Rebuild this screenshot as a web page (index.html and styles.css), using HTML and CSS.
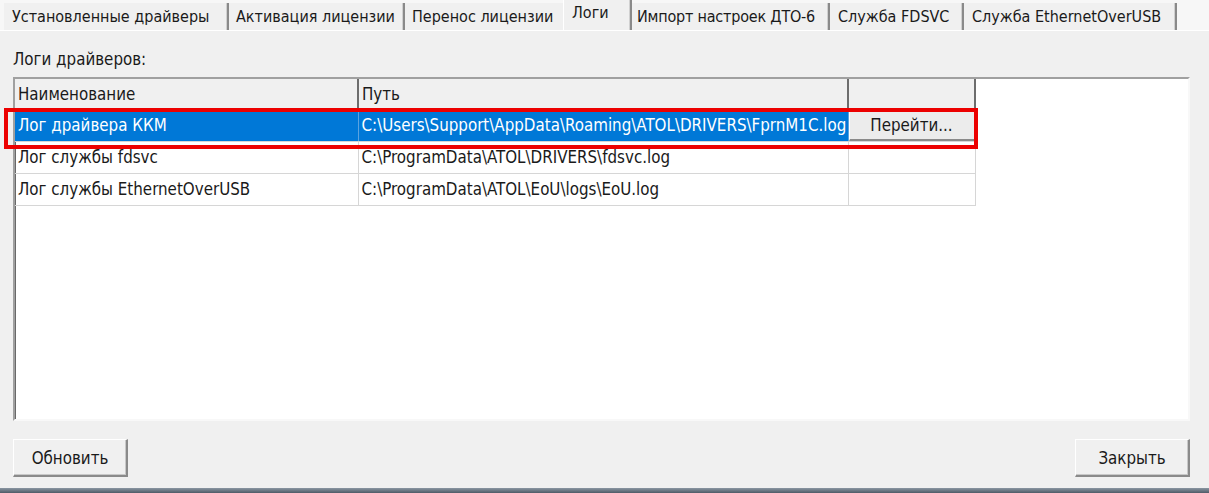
FILE: index.html
```html
<!DOCTYPE html>
<html lang="ru">
<head>
<meta charset="utf-8">
<title>Логи</title>
<link rel="stylesheet" href="styles.css">
</head>
<body>
<div class="window">
  <div class="tabs">
    <div class="tab t1">Установленные драйверы</div>
    <div class="tab t2">Активация лицензии</div>
    <div class="tab t3 prev">Перенос лицензии</div>
    <div class="tab t4 active">Логи</div>
    <div class="tab t5">Импорт настроек ДТО-6</div>
    <div class="tab t6">Служба FDSVC</div>
    <div class="tab t7">Служба EthernetOverUSB</div>
  </div>
  <div class="page">
    <div class="label">Логи драйверов:</div>
    <div class="listview">
      <table class="grid">
        <colgroup>
          <col class="c1"><col class="c2"><col class="c3"><col class="c4">
        </colgroup>
        <thead>
          <tr>
            <th>Наименование</th>
            <th>Путь</th>
            <th></th>
            <th class="blank"></th>
          </tr>
        </thead>
        <tbody>
          <tr class="selected">
            <td class="sel">Лог драйвера ККМ</td>
            <td class="sel">C:\Users\Support\AppData\Roaming\ATOL\DRIVERS\FprnM1C.log</td>
            <td class="btncell"><span class="cellbtn">Перейти...</span></td>
            <td class="blank"></td>
          </tr>
          <tr>
            <td>Лог службы fdsvc</td>
            <td>C:\ProgramData\ATOL\DRIVERS\fdsvc.log</td>
            <td></td>
            <td class="blank"></td>
          </tr>
          <tr>
            <td>Лог службы EthernetOverUSB</td>
            <td>C:\ProgramData\ATOL\EoU\logs\EoU.log</td>
            <td></td>
            <td class="blank"></td>
          </tr>
        </tbody>
      </table>
    </div>
    <div class="buttons">
      <button class="btn">Обновить</button>
      <button class="btn">Закрыть</button>
    </div>
  </div>
  <div class="bottombar"></div>
  <div class="highlight"></div>
</div>
</body>
</html>
```
FILE: styles.css
```css
* { box-sizing: border-box; }
html, body { margin: 0; padding: 0; }
body {
  background: #f0f0f0;
  font-family: "DejaVu Sans Condensed", "DejaVu Sans", sans-serif;
  font-size: 16.8px;
  color: #000;
}
.window {
  position: relative;
  width: 1209px;
  height: 493px;
  display: flex;
  flex-direction: column;
  overflow: hidden;
}
.tabs {
  height: 31px;
  display: flex;
  align-items: flex-end;
  padding-left: 4px;
  background: #f7f7f7;
  border-bottom: 1px solid #ffffff;
  font-size: 16px;
}
.tab {
  flex: none;
  height: 27px;
  line-height: 27px;
  padding: 0 0 0 8px;
  background: #f0f0f0;
  border-right: 2px solid #8a8a8a;
  box-shadow: inset -1px 0 0 #d0d0d0;
  white-space: nowrap;
  overflow: hidden;
  color: #1a1a1a;
}
.t1 { width: 225px; }
.t2 { width: 176px; padding-left: 7px; }
.t3 { width: 158px; padding-left: 7px; }
.t4 { width: 69px; }
.t5 { width: 198px; padding-left: 5px; letter-spacing: -0.2px; }
.t6 { width: 134px; }
.t7 { width: 213px; padding-left: 8px; }
.tab.prev {
  border-right: none;
  box-shadow: none;
}
.tab.active {
  height: 31px;
  line-height: 25px;
  padding: 0 0 6px 8px;
  border-left: 1px solid #ffffff;
  border-top: 1px solid #ffffff;
  background: #f0f0f0;
}
.page {
  flex: 1;
  display: flex;
  flex-direction: column;
  padding: 18px 19px 10px 13px;
}
.label {
  height: 20px;
  line-height: 20px;
  color: #1a1a1a;
}
.listview {
  margin-top: 8px;
  width: 1177px;
  height: 344px;
  background: #ffffff;
  border-top: 2px solid #a0a0a0;
  border-left: 2px solid #a0a0a0;
  border-right: 2px solid #f8f8f8;
  border-bottom: 2px solid #f8f8f8;
  box-shadow: inset 1px 1px 0 #696969;
}
.grid {
  border-collapse: collapse;
  table-layout: fixed;
  width: 1173px;
}
.c1 { width: 343px; }
.c2 { width: 490px; }
.c3 { width: 127px; }
.c4 { width: 213px; }
.grid th {
  height: 30px;
  text-align: left;
  font-weight: normal;
  padding: 0 3px;
  background: #f0f0f0;
  border-right: 2px solid #6d6d6d;
  border-bottom: 1px solid #a0a0a0;
  white-space: nowrap;
  color: #1a1a1a;
}
.grid th.blank { background: #ffffff; border: none; }
.grid td {
  height: 32px;
  padding: 0 3px;
  border-right: 1px solid #d6d6d6;
  border-bottom: 1px solid #d6d6d6;
  white-space: nowrap;
  overflow: hidden;
  color: #1a1a1a;
}
.grid td.blank { border: none; }
.grid td.sel {
  background: #0078d7;
  color: #ffffff;
  border-right-color: #5aa3e0;
}
.grid td.btncell { padding: 0; }
.cellbtn {
  display: flex;
  align-items: center;
  justify-content: center;
  height: 31px;
  background: #ececec;
  border-top: 1px solid #ffffff;
  border-left: 1px solid #ffffff;
  border-bottom: 2px solid #8a8a8a;
  border-right: 1px solid #a0a0a0;
  color: #1a1a1a;
}
.buttons {
  margin-top: 18px;
  display: flex;
  justify-content: space-between;
  width: 1177px;
}
.btn {
  width: 115px;
  height: 38px;
  font: inherit;
  color: #1a1a1a;
  background: #f0f0f0;
  border-top: 1px solid #ffffff;
  border-left: 1px solid #ffffff;
  border-right: 2px solid #8a8a8a;
  border-bottom: 2px solid #8a8a8a;
  box-shadow: inset -1px -1px 0 #c8c8c8;
  padding: 0;
}
.bottombar {
  height: 5px;
  background: linear-gradient(#8a96a2, #4f5b67);
}
.highlight {
  position: absolute;
  left: 4px;
  top: 108px;
  width: 974px;
  height: 41px;
  border: 4px solid #ec0000;
  pointer-events: none;
}
```
